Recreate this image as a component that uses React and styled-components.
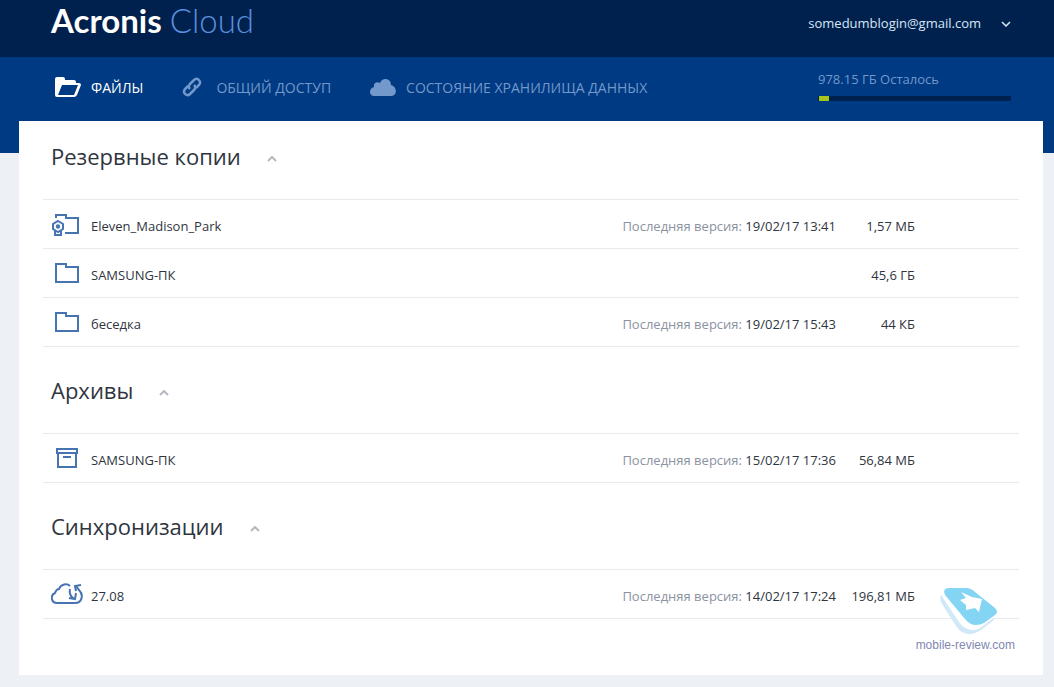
import React, { useState } from "react";
import styled, { createGlobalStyle } from "styled-components";

const sections = [
  {
    title: "Резервные копии",
    items: [
      {
        icon: "device",
        name: "Eleven_Madison_Park",
        date: "19/02/17 13:41",
        size: "1,57 МБ",
      },
      { icon: "folder", name: "SAMSUNG-ПК", size: "45,6 ГБ" },
      {
        icon: "folder",
        name: "беседка",
        date: "19/02/17 15:43",
        size: "44 КБ",
      },
    ],
  },
  {
    title: "Архивы",
    items: [
      {
        icon: "archive",
        name: "SAMSUNG-ПК",
        date: "15/02/17 17:36",
        size: "56,84 МБ",
      },
    ],
  },
  {
    title: "Синхронизации",
    items: [
      {
        icon: "sync",
        name: "27.08",
        date: "14/02/17 17:24",
        size: "196,81 МБ",
      },
    ],
  },
];

const icons = {
  folder: <path d="M5 5h10v3h12v15H5z" />,
  device: (
    <>
      <path d="M5 8V5h10v3h12v15H14" />
      <path d="M7 11l5 3v5l-5 3-5-3v-5z" />
      <circle cx="7" cy="16.5" r="1.2" />
      <path d="M4 21v4h6v-4" />
    </>
  ),
  archive: <path d="M6 5h20v4H6zM7 9v14h18V9M12 13h8" />,
  sync: (
    <>
      <path d="M19 6c-3-3-9-2-11 3-2 0-3 1-4 4-5 2-4 10 2 10h18c7 0 9-8 4-13l-3-4" />
      <path d="M19 9c-1 4 0 7 4 10M18 18l6 1 1-6M25 11l-1-5 6-1" />
    </>
  ),
};

const Chevron = ({ up }) => (
  <svg width="10" height="6" viewBox="0 0 10 6" aria-hidden="true">
    <path
      d={up ? "M1 5l4-4 4 4" : "M1 1l4 4 4-4"}
      fill="none"
      stroke="currentColor"
      strokeWidth={up ? 2 : 1.5}
    />
  </svg>
);

const Section = ({ title, items }) => {
  const [open, setOpen] = useState(true);

  return (
    <section>
      <Title>
        <h2>{title}</h2>
        <Toggle
          type="button"
          aria-label={title}
          aria-expanded={open}
          onClick={() => setOpen(!open)}
        >
          <Chevron up={open} />
        </Toggle>
      </Title>
      {open && (
        <Table aria-label={title}>
          <tbody>
            {items.map((item) => (
              <tr key={item.name}>
                <IconCell>
                  <RowIcon viewBox="0 0 32 28" aria-hidden="true">
                    {icons[item.icon]}
                  </RowIcon>
                </IconCell>
                <td>{item.name}</td>
                <VersionCell>
                  {item.date && (
                    <>
                      <span>Последняя версия:</span> {item.date}
                    </>
                  )}
                </VersionCell>
                <SizeCell>{item.size}</SizeCell>
                <EndCell />
              </tr>
            ))}
          </tbody>
        </Table>
      )}
    </section>
  );
};

const App = () => {
  return (
    <>
      <GlobalStyle />
      <TopBar>
        <Logo>
          Acronis <span>Cloud</span>
        </Logo>
        <Account type="button">
          somedumblogin@gmail.com
          <Chevron />
        </Account>
      </TopBar>
      <NavBar>
        <Nav>
          <NavLink href="#files" $active>
            <svg width="27" height="20" viewBox="0 0 27 20" aria-hidden="true">
              <path
                fillRule="evenodd"
                d="M3 0h6q2 0 2 2v1h9q2 0 2 2v1h3q2 0 2 2l-4 10q-1 2-3 2H3q-2 0-2-2V2q0-2 2-2zM8 8L4 18h16l4-10z"
              />
            </svg>
            Файлы
          </NavLink>
          <NavLink href="#shared" $gap={14}>
            <svg width="20" height="20" viewBox="0 0 20 20" aria-hidden="true">
              <g fill="none" stroke="currentColor" strokeWidth="2.5">
                <path d="M8 12c-2-2-1-4 0-5l4-4c3-3 8 1 5 5l-3 3" />
                <path d="M12 8c2 2 1 4 0 5l-4 4c-3 3-8-1-5-5l3-3" />
              </g>
            </svg>
            Общий доступ
          </NavLink>
          <NavLink href="#storage">
            <svg width="26" height="17" viewBox="0 0 26 17" aria-hidden="true">
              <path d="M5 17c-7 0-6-8-1-9-1-4 3-6 6-4 2-6 11-5 11 2 7 2 6 11 0 11z" />
            </svg>
            Состояние хранилища данных
          </NavLink>
        </Nav>
        <Quota>
          <label htmlFor="quota">978.15 ГБ Осталось</label>
          <progress id="quota" max="100" value="5" />
        </Quota>
      </NavBar>
      <Panel>
        {sections.map((section) => (
          <Section key={section.title} {...section} />
        ))}
        <Watermark>
          <svg width="60" height="48" viewBox="0 0 60 48" aria-hidden="true">
            <path
              fill="#d0e8f8"
              d="M1 8q-2 4 1 9l14 22q5 8 14 8 5 0 11-4l13-10V22L5 6z"
            />
            <path
              fill="#fff"
              d="M3 3Q0 6 3 11l16 24q6 8 14 8 5 0 10-4l13-10q2-2 1-6L10 0z"
            />
            <path
              fill="#84d4f4"
              d="M9 1h17q5 0 9 4l20 16q4 4 0 7L44 36q-4 2-8 2-6 0-11-6L5 8Q2 1 9 1z"
            />
            <path
              fill="#fff"
              d="M21 5l11 5 10 2-3 13-4-4-9 2v-5l-6-5 6-2z"
            />
          </svg>
          mobile-review.com
        </Watermark>
      </Panel>
    </>
  );
};

const GlobalStyle = createGlobalStyle`
  * {
    box-sizing: border-box;
  }
  body {
    margin: 0;
    background: #edf0f5;
    color: #2f353e;
    font-family: "Open Sans", sans-serif;
    font-size: 13px;
  }
  button {
    padding: 0;
    border: none;
    background: none;
    font: inherit;
    cursor: pointer;
  }
`;

const TopBar = styled.header`
  display: flex;
  justify-content: space-between;
  align-items: flex-start;
  height: 57px;
  padding: 0 43px 0 51px;
  background: #00214d;
`;

const Logo = styled.div`
  color: #fff;
  font-family: Lato, sans-serif;
  font-size: 33px;
  font-weight: 700;
  line-height: 40px;
  span {
    color: #5a8fdf;
    font-weight: 300;
  }
`;

const Account = styled.button`
  display: flex;
  align-items: center;
  gap: 20px;
  color: #d8e6f8;
  line-height: 47px;
`;

const NavBar = styled.div`
  display: flex;
  justify-content: space-between;
  align-items: flex-start;
  height: 96px;
  padding: 0 43px 0 54px;
  background: #003a82;
`;

const Nav = styled.nav`
  display: flex;
  gap: 39px;
`;

const NavLink = styled.a`
  display: flex;
  align-items: center;
  gap: ${(props) => props.$gap || 10}px;
  height: 60px;
  color: ${(props) => (props.$active ? "#fff" : "#7298cc")};
  font-size: 14px;
  font-weight: ${(props) => (props.$active ? 500 : 400)};
  text-decoration: none;
  text-transform: uppercase;
  svg {
    fill: currentColor;
  }
`;

const Quota = styled.div`
  display: flex;
  flex-direction: column;
  width: 193px;
  gap: 7px;
  padding: 13px 0 0;
  color: #7298cc;
  line-height: 19px;
  progress {
    width: 100%;
    height: 5px;
    border: none;
    appearance: none;
    background: #00214d;
  }
  progress::-webkit-progress-bar {
    padding: 0 1px;
    background: #00214d;
  }
  progress::-webkit-progress-value {
    background: #a3c51c;
  }
`;

const Panel = styled.main`
  position: relative;
  margin: -32px 11px 12px 19px;
  padding: 0 24px 48px;
  background: #fff;
`;

const Title = styled.div`
  display: flex;
  align-items: center;
  gap: 26px;
  height: 78px;
  padding: 0 8px 8px;
  h2 {
    margin: 0;
    font-size: 22px;
    font-weight: 400;
  }
`;

const Toggle = styled.button`
  display: flex;
  padding: 6px 0 0;
  color: #b4b9c0;
`;

const Table = styled.table`
  width: 100%;
  border-collapse: collapse;
  margin: 0 0 8px;
  tr {
    height: 49px;
    border-top: 1px solid #e8ebee;
    border-bottom: 1px solid #e8ebee;
  }
  td {
    padding: 4px 0 0;
    white-space: nowrap;
  }
`;

const IconCell = styled.td`
  width: 48px;
`;

const RowIcon = styled.svg`
  display: block;
  width: 32px;
  height: 28px;
  margin: 0 0 4px 8px;
  fill: none;
  stroke: #4674b0;
  stroke-width: 2;
`;

const VersionCell = styled.td`
  text-align: right;
  span {
    color: #8b93a1;
  }
`;

const SizeCell = styled.td`
  width: 79px;
  text-align: right;
`;

const EndCell = styled.td`
  width: 104px;
`;

const Watermark = styled.div`
  position: absolute;
  right: 28px;
  bottom: 20px;
  display: flex;
  flex-direction: column;
  color: #8288b2;
  font-family: "Liberation Sans", sans-serif;
  font-size: 12px;
  line-height: 20px;
  svg {
    align-self: flex-end;
    margin: 0 15px 0 0;
  }
`;

export default App;
